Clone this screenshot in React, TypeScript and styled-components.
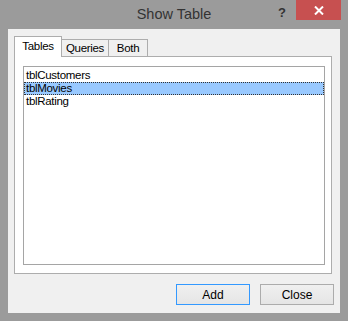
import styled, { createGlobalStyle } from "styled-components";

const GlobalStyle = createGlobalStyle`
  html, body {
    margin: 0;
    padding: 0;
    background: #9b9b9b;
  }
  * {
    box-sizing: border-box;
  }
`;

const Window = styled.div`
  position: relative;
  width: 348px;
  height: 321px;
  display: flex;
  flex-direction: column;
  padding: 0 8px 8px 8px;
  background: #9b9b9b;
  font-family: "Liberation Sans", Arial, sans-serif;
`;

const TitleBar = styled.div`
  height: 30px;
  display: flex;
  align-items: center;
  justify-content: center;
  font-size: 14.5px;
  color: #333;
  padding-bottom: 1px;
`;

const HelpGlyph = styled.span`
  position: absolute;
  top: 5px;
  left: 278px;
  font-size: 13px;
  font-weight: bold;
  color: #333;
`;

const CloseBox = styled.div`
  position: absolute;
  top: 0;
  left: 296px;
  width: 45px;
  height: 20px;
  background: #c75050;
  display: flex;
  align-items: center;
  justify-content: center;
`;

const Client = styled.div`
  flex: 1;
  background: #f0f0f0;
  display: flex;
  flex-direction: column;
  padding: 7px 6px 8px 6px;
  font-size: 11.5px;
  letter-spacing: -0.3px;
  color: #000;
`;

const TabStrip = styled.div`
  display: flex;
  align-items: flex-end;
  height: 21px;
  position: relative;
  z-index: 1;
`;

const Tab = styled.div<{ $active?: boolean; $width: number }>`
  width: ${(p) => p.$width}px;
  height: ${(p) => (p.$active ? "21px" : "18px")};
  margin-left: -1px;
  border: 1px solid #adadad;
  border-bottom: ${(p) => (p.$active ? "none" : "1px solid #adadad")};
  background: ${(p) => (p.$active ? "#fff" : "#f0f0f0")};
  display: flex;
  justify-content: center;
  align-items: flex-start;
  padding-top: ${(p) => (p.$active ? "3px" : "2px")};
  &:first-child {
    margin-left: 0;
  }
`;

const Panel = styled.div`
  width: 318px;
  height: 218px;
  margin-top: -1px;
  border: 1px solid #adadad;
  background: #fff;
  padding: 9px 6px 8px 8px;
  display: flex;
`;

const ListBox = styled.div`
  flex: 1;
  border: 1px solid #a5a5a5;
  background: #fff;
  padding-top: 2px;
`;

const ListItem = styled.div<{ $selected?: boolean }>`
  height: 13px;
  line-height: 13px;
  padding-left: 2px;
  background: ${(p) => (p.$selected ? "#99c9ff" : "transparent")};
  outline: ${(p) => (p.$selected ? "1px dotted #333" : "none")};
  outline-offset: -1px;
`;

const ButtonRow = styled.div`
  display: flex;
  justify-content: flex-end;
  gap: 10px;
  margin-top: 10px;
`;

const Button = styled.div<{ $default?: boolean }>`
  width: 74px;
  height: 21px;
  border: 1px solid ${(p) => (p.$default ? "#3399ff" : "#acacac")};
  background: linear-gradient(#f0f0f0, #e5e5e5);
  display: flex;
  align-items: center;
  justify-content: center;
  letter-spacing: 0;
  font-size: 12px;
`;

export default function App() {
  return (
    <>
      <GlobalStyle />
      <Window>
        <TitleBar>Show Table</TitleBar>
        <HelpGlyph>?</HelpGlyph>
        <CloseBox>
          <svg width="10" height="9" viewBox="0 0 10 9">
            <path d="M1 0.5 L9 8.5 M9 0.5 L1 8.5" stroke="#fff" strokeWidth="2" />
          </svg>
        </CloseBox>
        <Client>
          <TabStrip>
            <Tab $active $width={48}>Tables</Tab>
            <Tab $width={48}>Queries</Tab>
            <Tab $width={40}>Both</Tab>
          </TabStrip>
          <Panel>
            <ListBox>
              <ListItem>tblCustomers</ListItem>
              <ListItem $selected>tblMovies</ListItem>
              <ListItem>tblRating</ListItem>
            </ListBox>
          </Panel>
          <ButtonRow>
            <Button $default>Add</Button>
            <Button>Close</Button>
          </ButtonRow>
        </Client>
      </Window>
    </>
  );
}
